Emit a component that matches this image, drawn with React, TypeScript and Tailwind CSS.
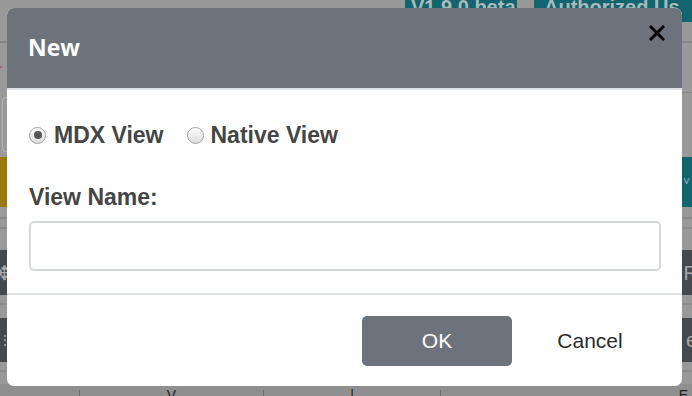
import React from 'react';

function Radio({ checked }: { checked?: boolean }) {
  return (
    <span className="w-[17px] h-[17px] rounded-full border border-[#a3a3a3] bg-gradient-to-b from-[#fdfdfd] to-[#dcdcdc] flex items-center justify-center shrink-0">
      {checked && <span className="w-[8px] h-[8px] rounded-full bg-[#555]" />}
    </span>
  );
}

function Backdrop() {
  return (
    <div className="w-[692px] h-[396px] bg-[#999999] flex flex-col overflow-hidden font-['Liberation_Sans',Arial,sans-serif]">
      <div className="h-[22px] flex shrink-0">
        <div className="w-[405px]" />
        <div className="w-[112px] bg-[#12646e] text-[#a9b9bc] text-[20px] font-bold leading-[14px] pl-[6px]">V1.9.0.beta</div>
        <div className="w-[17px]" />
        <div className="flex-1 bg-[#12646e] text-[#a9b9bc] text-[20px] font-bold leading-[14px] pl-[10px]">Authorized Us</div>
      </div>
      <div className="h-[19px] shrink-0" />
      <div className="h-[2px] bg-[#868686] shrink-0" />
      <div className="h-[20px] shrink-0" />
      <div className="h-[14px] shrink-0 text-[#a0417f] text-[16px] leading-[14px] ml-[-3px]">r</div>
      <div className="h-[15px] shrink-0" />
      <div className="h-[1px] ml-auto w-[10px] bg-[#868686] shrink-0" />
      <div className="h-[4px] shrink-0" />
      <div className="h-[55px] shrink-0 ml-[2px] w-[20px] rounded-[4px] border border-[#b5b5b5]" />
      <div className="h-[5px] shrink-0" />
      <div className="h-[50px] shrink-0 flex">
        <div className="w-[346px] bg-[#9b7800]" />
        <div className="flex-1 bg-[#12646e] flex items-center justify-end pr-[2px] text-[#9ab] text-[12px]">˅</div>
      </div>
      <div className="h-[10px] shrink-0" />
      <div className="h-[2px] bg-[#8b8b8b] shrink-0" />
      <div className="h-[8px] shrink-0" />
      <div className="h-[2px] bg-[#8b8b8b] shrink-0" />
      <div className="h-[21px] shrink-0" />
      <div className="h-[45px] shrink-0 bg-[#44494e] flex items-center justify-between text-[#a7a7a7] text-[20px]">
        <span className="ml-[-4px]">✥</span>
        <span className="mr-[-6px]">R</span>
      </div>
      <div className="h-[8px] shrink-0" />
      <div className="h-[2px] bg-[#8b8b8b] shrink-0" />
      <div className="h-[13px] shrink-0" />
      <div className="h-[44px] shrink-0 bg-[#44494e] flex items-center justify-between text-[#a7a7a7] text-[20px]">
        <span className="ml-[-2px] text-[14px]">⋮</span>
        <span className="mr-[-5px]">e</span>
      </div>
      <div className="h-[8px] shrink-0" />
      <div className="h-[2px] bg-[#8b8b8b] shrink-0" />
      <div className="h-[12px] shrink-0" />
      <div className="flex-1 bg-[#8f8f8f] flex text-[#222] text-[14px] leading-[10px] pt-[6px]">
        <div className="w-[80px] border-r border-[#6e6e6e]" />
        <div className="w-[184px] border-r border-[#6e6e6e] text-center">V</div>
        <div className="w-[177px] border-r border-[#6e6e6e] text-center">|</div>
        <div className="flex-1 text-right pr-[4px]">E</div>
      </div>
    </div>
  );
}

export default function App() {
  return (
    <div className="relative w-[692px] h-[396px] overflow-hidden">
      <Backdrop />
      <div className="absolute left-[7px] top-[8px] w-[675px] h-[378px] bg-white rounded-[7px] overflow-hidden flex flex-col font-['Liberation_Sans',Arial,sans-serif]">
        <div className="h-[82px] shrink-0 bg-[#6c737c] border-b-2 border-[#dfe3e7] flex justify-between pl-[21px] pr-[17px]">
          <h2 className="self-center mt-[-2px] text-white text-[23px] font-bold font-['Open_Sans',sans-serif]">New</h2>
          <button className="mt-[17px] self-start w-[16px] h-[16px]">
            <svg viewBox="0 0 16 16" width="16" height="16">
              <path d="M2 2 L14 14 M14 2 L2 14" stroke="#000" strokeWidth="3" strokeLinecap="square" />
            </svg>
          </button>
        </div>
        <div className="flex-1 pl-[22px] pr-[21px] pt-[32px] text-[#454545] text-[23px] font-bold">
          <div className="flex items-center h-[26px]">
            <Radio checked />
            <span className="ml-[8px]">MDX View</span>
            <span className="ml-[23px]"><Radio /></span>
            <span className="ml-[7px]">Native View</span>
          </div>
          <div className="mt-[36px] h-[26px] flex items-center">View Name:</div>
          <input className="mt-[11px] w-full h-[50px] rounded-[5px] border-2 border-[#d5d9de] outline-none px-3 text-[18px] font-normal" />
        </div>
        <div className="h-[93px] shrink-0 border-t-2 border-[#dfe3e7] flex items-center justify-end pr-[17px]">
          <button className="w-[150px] h-[50px] rounded-[5px] bg-[#6c737c] text-white text-[21px]">OK</button>
          <button className="ml-[3px] w-[150px] h-[50px] text-[#2b2b2b] text-[21px]">Cancel</button>
        </div>
      </div>
    </div>
  );
}
